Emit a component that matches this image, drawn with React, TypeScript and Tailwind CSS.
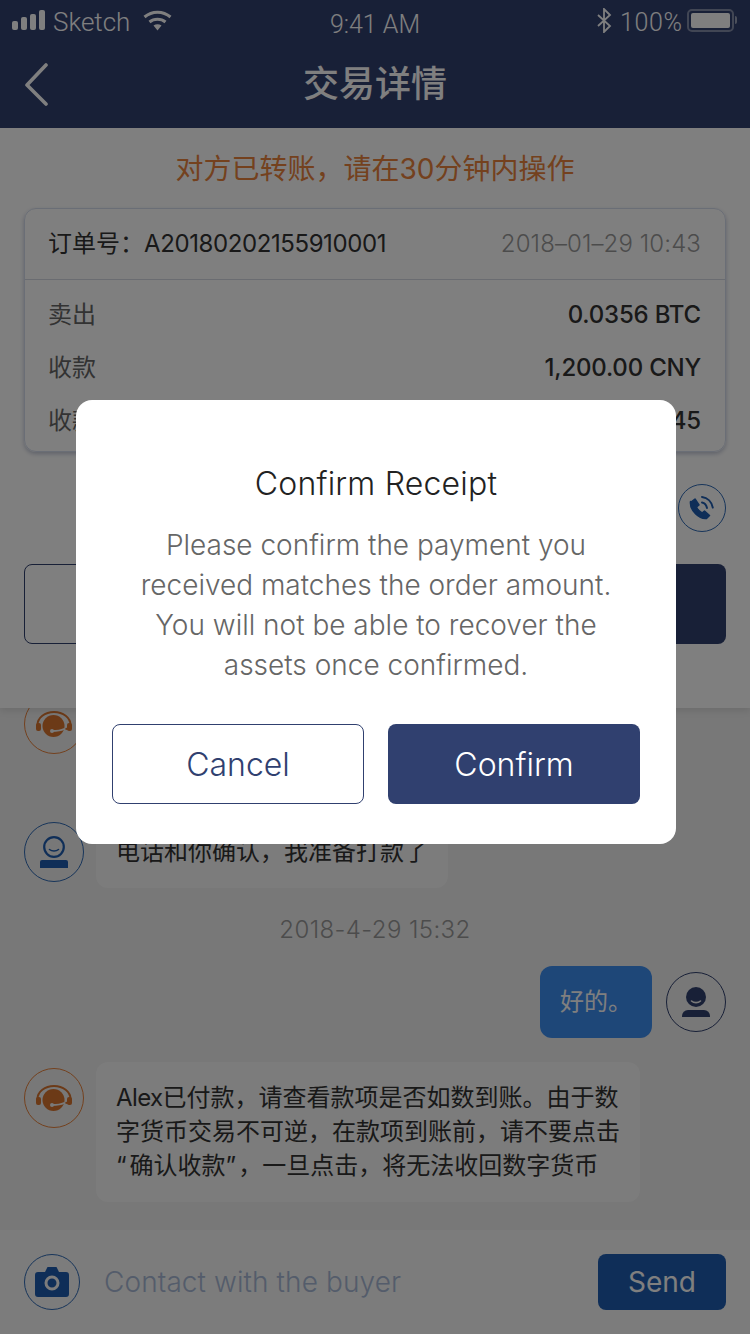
import React from "react";

const sans = "font-['Inter','Noto_Sans_CJK_SC',sans-serif]";

const AgentAvatar = () => (
  <div className="w-[60px] h-[60px] rounded-full border border-[#e8823c] flex items-center justify-center shrink-0">
    <svg width="36" height="26" viewBox="0 0 36 26">
      <path d="M1.500 14a16.500 13 0 0 1 33 0" fill="none" stroke="#d9742f" strokeWidth="2" />
      <rect x="0" y="12" width="5" height="8" rx="2" fill="#d9742f" />
      <rect x="31" y="12" width="5" height="8" rx="2" fill="#d9742f" />
      <circle cx="17.500" cy="15" r="11" fill="#d9742f" />
      <path d="M16 20c5 0 9-.5 12-2" fill="none" stroke="#f4f4f4" strokeWidth="1.800" strokeLinecap="round" />
      <circle cx="16" cy="20" r="2" fill="#f4f4f4" />
      <path d="M29.500 18L33 17.500" stroke="#d9742f" strokeWidth="2" />
    </svg>
  </div>
);

const BuyerAvatar = () => (
  <div className="w-[60px] h-[60px] rounded-full border border-[#2f6ab5] flex items-center justify-center shrink-0">
    <svg width="28" height="32" viewBox="0 0 28 32">
      <circle cx="14" cy="11" r="9.800" fill="none" stroke="#1f5db0" strokeWidth="2.200" />
      <path d="M9.500 13.500c2.500 2 6.500 2 9 0" fill="none" stroke="#1f5db0" strokeWidth="1.600" strokeLinecap="round" />
      <path d="M2 24h24a2 2 0 0 1 2 2v6H0v-6a2 2 0 0 1 2-2z" fill="#1f5db0" />
    </svg>
  </div>
);

const MeAvatar = () => (
  <div className="w-[60px] h-[60px] rounded-full border border-[#30406f] flex items-center justify-center shrink-0">
    <svg width="28" height="30" viewBox="0 0 28 30">
      <circle cx="14" cy="10" r="10" fill="#30406f" />
      <path d="M9.500 14c2.500 2.200 6.500 2.200 9 0" fill="none" stroke="#f4f4f4" strokeWidth="1.600" strokeLinecap="round" />
      <path d="M6 23h16a6 6 0 0 1 6 6v1H0v-1a6 6 0 0 1 6-6z" fill="#30406f" />
    </svg>
  </div>
);

const StatusBar = () => (
  <div className="relative h-10 flex items-center justify-between text-white text-[25px] font-light font-['Roboto','Liberation_Sans',sans-serif]">
    <div className="flex items-center pl-3">
      <svg width="34" height="20" viewBox="0 0 34 20" fill="white">
        <rect x="0" y="11" width="6" height="9" rx="2" />
        <rect x="9" y="7" width="6" height="13" rx="2" />
        <rect x="18" y="4" width="6" height="16" rx="2" />
        <rect x="27" y="0" width="6" height="20" rx="2" />
      </svg>
      <span className="ml-[7px] w-[90px] pt-[5px] text-[26px]">Sketch</span>
      <svg width="29" height="21" viewBox="0 0 29 21" className="-mb-px">
        <path d="M1.500 7c7.500-6.500 18.500-6.500 26 0" fill="none" stroke="white" strokeWidth="3" />
        <path d="M6.500 12c4.500-3.800 11.500-3.800 16 0" fill="none" stroke="white" strokeWidth="3" />
        <path d="M10.500 15.500c2.400-1.800 5.600-1.800 8 0L14.500 20.500z" fill="white" />
      </svg>
    </div>
    <div className="absolute left-0 right-0 top-[5px] text-center leading-10">9:41 AM</div>
    <div className="flex items-center pr-[13px]">
      <svg width="15" height="25" viewBox="0 0 15 25" fill="none" stroke="white" strokeWidth="1.800">
        <path d="M1 7l12 11-6 6V1l6 6-12 11" />
      </svg>
      <span className="ml-2 w-[67px] pt-[5px] tracking-[0.6px]">100%</span>
      <div className="w-[47px] h-[23px] rounded-[5px] border-2 border-white/40 p-[2px]">
        <div className="w-full h-full bg-white rounded-[2px]" />
      </div>
      <div className="ml-px w-[2px] h-[8px] bg-white/50 rounded-r" />
    </div>
  </div>
);

const Row = ({ label, value }: { label: string; value: string }) => (
  <div className="h-[53px] flex items-center justify-between text-[24px]">
    <span className="text-[#666666]">{label}</span>
    <span className="font-medium tracking-[-0.2px] text-[#333333]">{value}</span>
  </div>
);

export default function App() {
  return (
    <div className={`relative w-[750px] h-[1334px] overflow-hidden flex flex-col bg-[#f0f0f0] ${sans}`}>
      {/* Top part */}
      <div className="relative z-10 h-[708px] shrink-0 bg-white shadow-[0_2px_8px_rgba(0,0,0,0.12)]">
        <div className="bg-[#30406f] h-32">
          <StatusBar />
          <div className="relative h-[88px] flex items-center justify-center">
            <svg className="absolute left-[24px] top-[22px]" width="26" height="44" viewBox="0 0 26 44" fill="none">
              <path d="M22 3L3 23l19 19" stroke="white" strokeWidth="3.600" strokeLinecap="round" strokeLinejoin="round" />
            </svg>
            <span className="text-white text-[36px] font-medium -mt-[1px]">交易详情</span>
          </div>
        </div>

        <div className="h-20 pt-px flex items-center justify-center text-[#e8823c] text-[28px]">
          对方已转账，请在30分钟内操作
        </div>

        <div className="mx-6 h-[244px] rounded-xl border border-[#d5dcec] shadow-[0_2px_4px_rgba(48,64,111,0.3)]">
          <div className="h-[71px] pl-[23px] pr-6 flex items-center justify-between border-b border-[#d5d8e2] text-[24px]">
            <span className="text-[#333333]">
              订单号：<span className="tracking-[-0.4px]">A20180202155910001</span>
            </span>
            <span className="text-[#999999] font-light tracking-[0.1px]">2018–01–29 10:43</span>
          </div>
          <div className="pl-[23px] pr-6 pt-[8px]">
            <Row label="卖出" value="0.0356 BTC" />
            <Row label="收款" value="1,200.00 CNY" />
            <Row label="收款账号" value="6222 0000 2345" />
          </div>
        </div>

        <div className="flex justify-end px-6 mt-8">
          <div className="w-12 h-12 rounded-full border border-[#2f6ab5] flex items-center justify-center">
            <svg width="28" height="30" viewBox="0 0 28 30" fill="none">
              <path d="M3 9l4-3 4 6-2.500 2c1 2.500 3 4.500 5.500 6l2.500-2 5 4.500-3 3c-7 1-17-8-16-17z" fill="#1f5db0" stroke="#1f5db0" strokeWidth="1.500" strokeLinejoin="round" />
              <path d="M14 9.500c2.600.6 4.400 2.600 5 5.500" stroke="#1f5db0" strokeWidth="2" strokeLinecap="round" />
              <path d="M14 4c5.500.8 9.800 5 10.800 10.600" stroke="#1f5db0" strokeWidth="2" strokeLinecap="round" />
            </svg>
          </div>
        </div>

        <div className="flex gap-6 px-6 mt-8">
          <div className="flex-1 h-20 rounded-lg border border-[#30406f]" />
          <div className="flex-1 h-20 rounded-lg bg-[#30406f]" />
        </div>
      </div>

      {/* Chat */}
      <div className="h-[522px] overflow-hidden px-6">
        <div className="-mt-5 flex flex-col">
          <div className="flex gap-3 items-start">
            <div className="mt-[6px]"><AgentAvatar /></div>
            <div className="w-[352px] h-[104px] rounded-xl bg-[#f8f8f8]" />
          </div>
          <div className="flex gap-3 items-start mt-6">
            <div className="mt-[6px]"><BuyerAvatar /></div>
            <div className="w-[352px] h-[72px] rounded-xl bg-[#f8f8f8] px-5 flex items-center text-[24px] text-[#333333]">
              电话和你确认，我准备打款了
            </div>
          </div>
          <div className="h-[78px] pt-[6px] flex items-center justify-center text-[#999999] text-[24px] font-light tracking-[0.4px]">2018-4-29 15:32</div>
          <div className="flex gap-[14px] items-start justify-end">
            <div className="w-[112px] h-[72px] rounded-xl bg-[#3d8ef0] pl-5 flex items-center text-[24px] text-white">好的。</div>
            <div className="mt-[6px]"><MeAvatar /></div>
          </div>
          <div className="flex gap-3 items-start mt-6">
            <div className="mt-[6px]"><AgentAvatar /></div>
            <div className="w-[544px] h-[140px] rounded-xl bg-[#f8f8f8] pl-5 py-[19px] text-[24px] leading-[34px] text-[#333333] whitespace-nowrap">
              <span className="tracking-[-0.6px]">Alex</span>已付款，请查看款项是否如数到账。由于数
              <br />
              字货币交易不可逆，在款项到账前，请不要点击
              <br />
              <span className="tracking-[3px]">“</span>确认收款<span className="tracking-[2px]">”</span>，一旦点击，将无法收回数字货币
            </div>
          </div>
        </div>
      </div>

      {/* Input bar */}
      <div className="h-[104px] flex items-center justify-between px-6 bg-[#f8f8f8]">
        <div className="flex items-center">
          <div className="w-14 h-14 rounded-full border border-[#2f6ab5] flex items-center justify-center">
            <svg width="34" height="30" viewBox="0 0 34 30">
              <path d="M3 5h7l2-4a1 1 0 0 1 1-1h8a1 1 0 0 1 1 1l2 4h7a3 3 0 0 1 3 3v19a3 3 0 0 1-3 3H3a3 3 0 0 1-3-3V8a3 3 0 0 1 3-3z" fill="#1f5db0" />
              <circle cx="17" cy="16" r="6" fill="none" stroke="#f8f8f8" strokeWidth="3" />
            </svg>
          </div>
          <span className="ml-6 text-[28px] font-light tracking-[0.1px] text-[#a8b8d6]">Contact with the buyer</span>
        </div>
        <div className="w-32 h-14 rounded-lg bg-[#1f5db0] flex items-center justify-center text-white text-[28px]">Send</div>
      </div>

      {/* Dim layer and dialog */}
      <div className="absolute inset-0 z-20 bg-black/50 flex justify-center pt-[400px] pl-[2px]">
        <div className="w-[600px] h-[444px] rounded-2xl bg-white flex flex-col items-center">
          <div className="mt-[61px] text-[32px] leading-[46px] font-light tracking-[0.2px] text-[#222222]">Confirm Receipt</div>
          <div className="mt-[18px] w-[520px] text-center text-[28px] leading-10 font-light text-[#666666]">
            Please confirm the payment you received matches the order amount. You will not be able to recover the assets once confirmed.
          </div>
          <div className="mt-[39px] flex gap-6">
            <div className="w-[252px] h-20 pt-[2px] rounded-lg border border-[#30406f] flex items-center justify-center text-[32px] font-light text-[#30406f]">Cancel</div>
            <div className="w-[252px] h-20 pt-[2px] rounded-lg bg-[#30406f] flex items-center justify-center text-[32px] font-light text-white">Confirm</div>
          </div>
        </div>
      </div>
    </div>
  );
}
